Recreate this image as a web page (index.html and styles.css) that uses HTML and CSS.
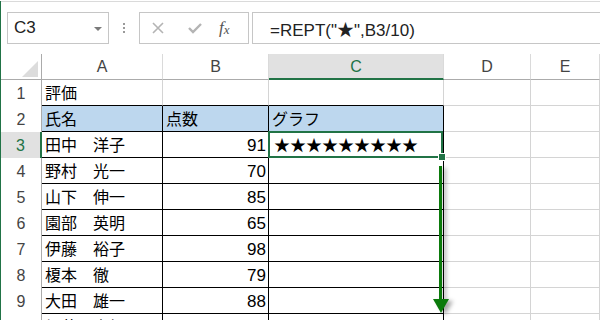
FILE: index.html
```html
<!DOCTYPE html>
<html lang="ja">
  <head>
    <meta charset="UTF-8" />
    <title>REPT</title>
    <link rel="stylesheet" href="styles.css">
  </head>
  <body>
    <div class="app">
      <!-- formula bar -->
      <div class="bar">
        <div class="namebox">
          <span>C3</span>
          <span class="caret"></span>
        </div>
        <div class="dots"><i></i><i></i><i></i></div>
        <div class="fbtns">
          <svg width="14" height="14" viewBox="0 0 14 14"><path d="M2 2 L12 12 M12 2 L2 12" stroke="#b4b4b4" stroke-width="1.6" fill="none"/></svg>
          <svg width="16" height="14" viewBox="0 0 16 14"><path d="M2 7 L6 11 L14 3" stroke="#b4b4b4" stroke-width="2.4" fill="none"/></svg>
          <span class="fx">f<sub>x</sub></span>
        </div>
        <div class="formula">=REPT("★",B3/10)</div>
      </div>

      <!-- sheet -->
      <div class="sheet">
        <div class="hd corner"><span class="tri"></span></div>
        <div class="hd">A</div>
        <div class="hd">B</div>
        <div class="hd cur">C</div>
        <div class="hd">D</div>
        <div class="hd">E</div>

        <div class="rh">1</div>
        <div class="c tb">評価</div>
        <div class="c tb"></div>
        <div class="c tb"></div>
        <div class="c"></div>
        <div class="c"></div>

        <div class="rh">2</div>
        <div class="c t blue">氏名</div>
        <div class="c t blue">点数</div>
        <div class="c t blue">グラフ</div>
        <div class="c"></div>
        <div class="c"></div>

        <div class="rh cur">3</div>
        <div class="c t">田中　洋子</div>
        <div class="c t num">91</div>
        <div class="c t sel">★★★★★★★★★<span class="handle"></span></div>
        <div class="c"></div>
        <div class="c"></div>

        <div class="rh">4</div>
        <div class="c t">野村　光一</div>
        <div class="c t num">70</div>
        <div class="c t"></div>
        <div class="c"></div>
        <div class="c"></div>

        <div class="rh">5</div>
        <div class="c t">山下　伸一</div>
        <div class="c t num">85</div>
        <div class="c t"></div>
        <div class="c"></div>
        <div class="c"></div>

        <div class="rh">6</div>
        <div class="c t">園部　英明</div>
        <div class="c t num">65</div>
        <div class="c t"></div>
        <div class="c"></div>
        <div class="c"></div>

        <div class="rh">7</div>
        <div class="c t">伊藤　裕子</div>
        <div class="c t num">98</div>
        <div class="c t"></div>
        <div class="c"></div>
        <div class="c"></div>

        <div class="rh">8</div>
        <div class="c t">榎本　徹</div>
        <div class="c t num">79</div>
        <div class="c t"></div>
        <div class="c"></div>
        <div class="c"></div>

        <div class="rh">9</div>
        <div class="c t">大田　雄一</div>
        <div class="c t num">88</div>
        <div class="c t"></div>
        <div class="c"></div>
        <div class="c"></div>

        <div class="rh">10</div>
        <div class="c t">加藤　恵紀子</div>
        <div class="c t num">93</div>
        <div class="c t"></div>
        <div class="c"></div>
        <div class="c"></div>

        <!-- fill-down arrow -->
        <svg class="arrow" width="24" height="150" viewBox="0 0 24 150">
          <rect x="6" y="0" width="3" height="134" fill="#0b7a0b"/>
          <path d="M0 133 L16 133 L8 147 Z" fill="#0b7a0b"/>
        </svg>
      </div>
    </div>
  </body>
</html>
```

FILE: styles.css
```css
html, body {
  margin: 0;
  overflow: hidden;
  background: #fff;
}
body {
  width: 600px;
  height: 320px;
  font-family: "Liberation Sans", "Noto Sans CJK JP", sans-serif;
  color: #000;
}
.app {
  border-left: 1px solid #217346;
  height: 320px;
}

/* formula bar */
.bar {
  display: flex;
  align-items: center;
  margin-top: 1px;
  border-top: 1px solid #dadada;
  padding: 10px 0 10px 6px;
  height: 32px;
}
.namebox {
  height: 30px;
  border: 1px solid #c6c6c6;
  display: flex;
  align-items: center;
  justify-content: space-between;
  padding: 0 6px 0 6px;
  box-sizing: content-box;
  width: 88px;
  font-size: 17px;
  color: #222;
}
.caret {
  width: 0;
  height: 0;
  border-left: 4px solid transparent;
  border-right: 4px solid transparent;
  border-top: 4px solid #7a7a7a;
  margin-top: 1px;
}
.dots {
  width: 30px;
  display: flex;
  flex-direction: column;
  align-items: center;
  gap: 2px;
}
.dots i {
  width: 2px;
  height: 2px;
  background: #9a9a9a;
}
.fbtns {
  height: 30px;
  border: 1px solid #c6c6c6;
  display: flex;
  align-items: center;
  padding-left: 11px;
  box-sizing: content-box;
  width: 97px;
}
.fbtns svg:first-child {
  margin-right: 22px;
}
.fbtns svg:nth-child(2) {
  margin-right: 16px;
}
.fx {
  font-family: "Liberation Serif", serif;
  font-style: italic;
  font-size: 17px;
  color: #555;
}
.fx sub {
  font-size: 13px;
  vertical-align: 0;
  position: relative;
  top: 1px;
}
.formula {
  flex: 1;
  margin-left: 3px;
  margin-right: -4px;
  height: 30px;
  border: 1px solid #c6c6c6;
  border-right: none;
  display: flex;
  align-items: center;
  padding-left: 17px;
  font-size: 17px;
  color: #222;
  white-space: nowrap;
}

/* sheet grid */
.sheet {
  position: relative;
  display: grid;
  grid-template-columns: 41px 121px 106px 175px 87px 1fr;
  grid-auto-rows: 26px;
}
.sheet > div {
  box-sizing: border-box;
}
.hd {
  border-right: 1px solid #dadada;
  border-bottom: 1px solid #ababab;
  display: flex;
  align-items: center;
  justify-content: center;
  font-size: 16px;
  color: #444;
  padding-top: 1px;
}
.hd.cur {
  background: #e1e1e1;
  color: #217346;
  border-bottom: 2px solid #217346;
  padding-top: 2px;
}
.corner {
  position: relative;
  border-right: 1px solid #ababab;
}
.tri {
  position: absolute;
  right: 3px;
  bottom: 2px;
  width: 0;
  height: 0;
  border-left: 16px solid transparent;
  border-bottom: 16px solid #dcdcdc;
}
.rh {
  border-right: 1px solid #ababab;
  display: flex;
  align-items: center;
  justify-content: center;
  font-size: 16px;
  color: #444;
  padding-top: 1px;
}
.rh.cur {
  background: #e1e1e1;
  color: #217346;
  border-right: 2px solid #217346;
}
.c {
  border-right: 1px solid #d4d4d4;
  border-bottom: 1px solid #d4d4d4;
  font-size: 16px;
  line-height: 25px;
  padding: 1px 3px 0 3px;
  white-space: nowrap;
}
.c.tb {
  border-bottom-color: #000;
}
.c.t {
  border-right-color: #000;
  border-bottom-color: #000;
}
.blue {
  background: #bdd7ee;
}
.num {
  text-align: right;
  padding-right: 2px;
  font-size: 17px;
}
.sel {
  position: relative;
  padding-left: 5px;
}
.sel::after {
  content: "";
  position: absolute;
  left: -1px;
  right: 0;
  top: -1px;
  bottom: -1px;
  border: 2px solid #217346;
}
.handle {
  position: absolute;
  right: -3px;
  bottom: -4px;
  width: 6px;
  height: 6px;
  background: #217346;
  border: 1px solid #fff;
  z-index: 2;
}
.arrow {
  position: absolute;
  left: 432px;
  top: 112px;
  filter: drop-shadow(4px 2px 2px rgba(0, 0, 0, 0.35));
}
```
